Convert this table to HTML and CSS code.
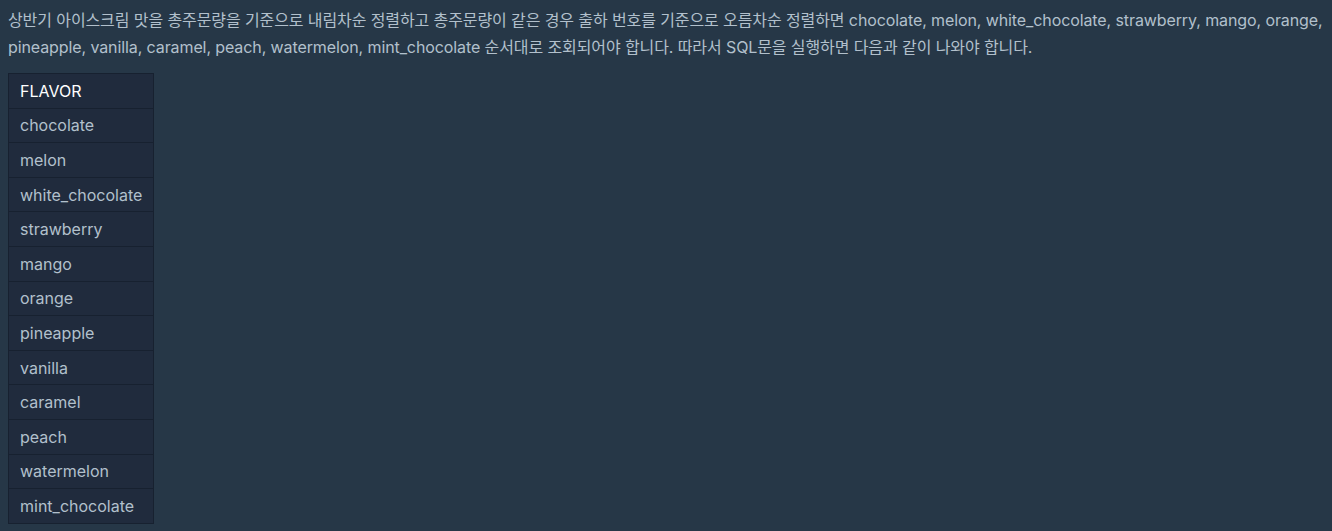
FILE: index.html
```html
<!DOCTYPE html>
<html lang="ko">
<head>
<meta charset="utf-8">
<link rel="stylesheet" href="styles.css">
</head>
<body>
<p class="desc">상반기 아이스크림 맛을 총주문량을 기준으로 내림차순 정렬하고 총주문량이 같은 경우 출하 번호를 기준으로 오름차순 정렬하면 chocolate, melon, white_chocolate, strawberry, mango, orange, pineapple, vanilla, caramel, peach, watermelon, mint_chocolate 순서대로 조회되어야 합니다. 따라서 SQL문을 실행하면 다음과 같이 나와야 합니다.</p>
<table class="result">
<thead><tr><th>FLAVOR</th></tr></thead>
<tbody>
<tr><td>chocolate</td></tr>
<tr><td>melon</td></tr>
<tr><td>white_chocolate</td></tr>
<tr><td>strawberry</td></tr>
<tr><td>mango</td></tr>
<tr><td>orange</td></tr>
<tr><td>pineapple</td></tr>
<tr><td>vanilla</td></tr>
<tr><td>caramel</td></tr>
<tr><td>peach</td></tr>
<tr><td>watermelon</td></tr>
<tr><td>mint_chocolate</td></tr>
</tbody>
</table>
</body>
</html>
```
FILE: styles.css
```css
html, body {
  background: #263747;
}
body {
  margin: 0;
  padding: 7px 0 6px 8px;
  font-family: Inter, "Noto Sans CJK KR", sans-serif;
  font-size: 16px;
  color: #b2c0cc;
}
.desc {
  margin: 0 0 12px;
  line-height: 27px;
  letter-spacing: -0.1px;
}
.result {
  border-collapse: collapse;
  background: #202b3d;
  border: 1px solid #172130;
}
.result th, .result td {
  border: 1px solid #172130;
  padding: 0 11px;
  height: 33.6px;
  text-align: left;
  line-height: 1;
}
.result th {
  color: #ffffff;
  font-weight: 400;
}
.result td {
  color: #b2c0cc;
  font-weight: 400;
}
```
